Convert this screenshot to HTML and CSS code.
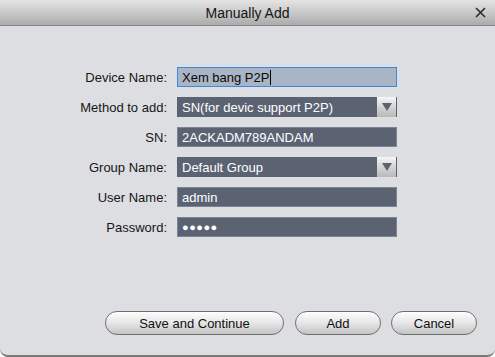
FILE: index.html
```html
<!DOCTYPE html>
<html lang="en">
<head>
  <meta charset="UTF-8"/>
  <title>Manually Add</title>
  <link rel="stylesheet" href="styles.css">
</head>
<body>
  <div class="dialog">
    <!-- title bar -->
    <div class="titlebar">
      <span class="title">Manually Add</span>
      <svg class="close" width="11" height="11" viewBox="0 0 11 11">
        <path d="M1 1 L10 10 M10 1 L1 10" stroke="#2b2b2b" stroke-width="1.6" fill="none"/>
      </svg>
    </div>

    <div class="content">
      <div class="form">
        <label>Device Name:</label>
        <div class="field focused">Xem bang P2P<span class="caret"></span></div>

        <label>Method to add:</label>
        <div class="field select">
          <span class="value">SN(for devic support P2P)</span>
          <span class="arrow"></span>
        </div>

        <label>SN:</label>
        <div class="field">2ACKADM789ANDAM</div>

        <label>Group Name:</label>
        <div class="field select">
          <span class="value">Default Group</span>
          <span class="arrow"></span>
        </div>

        <label>User Name:</label>
        <div class="field">admin</div>

        <label>Password:</label>
        <div class="field dots">●●●●●</div>
      </div>

      <div class="buttons">
        <button class="btn wide">Save and Continue</button>
        <button class="btn">Add</button>
        <button class="btn">Cancel</button>
      </div>
    </div>
  </div>
</body>
</html>
```

FILE: styles.css
```css
* { margin:0; padding:0; box-sizing:border-box; }
html, body { width:100%; height:100%; background:#ffffff; }
body { font-family:"Liberation Sans", Arial, sans-serif; font-size:13px; color:#111; }

/* === window === */
.dialog {
  width:495px; height:357px;
  display:flex; flex-direction:column;
  background:#dcdee2;
  border-bottom:2px solid #7a7a7a;
  border-radius:0 0 8px 8px;
  overflow:hidden;
}
.titlebar {
  height:26px;
  flex:none;
  display:flex; align-items:center; justify-content:center;
  position:relative;
  background:linear-gradient(#e4e4e4, #c6c6c6 55%, #ababab);
  border-bottom:1px solid #858585;
}
.title { font-size:14px; color:#151515; }
.close { position:absolute; right:9px; top:7px; }

/* === form === */
.content {
  flex:1;
  display:flex; flex-direction:column;
  padding-top:41px;
}
.form {
  display:grid;
  grid-template-columns:167px 220px;
  grid-auto-rows:20px;
  column-gap:10px;
  row-gap:10px;
}
.form label {
  justify-self:end; align-self:center;
  color:#161616;
}
.field {
  display:flex; align-items:center;
  padding-left:4px;
  background:#5b6373;
  border:1px solid #7d8594;
  color:#ffffff;
  white-space:nowrap;
}
.field.focused {
  background:#a9b4c5;
  border-color:#3a89dc;
  color:#0a0a0a;
}
.caret { display:inline-block; width:1px; height:15px; background:#000; margin-left:1px; }
.field.select { padding-right:0; border-color:#5b6373; }
.field.select .value { flex:1; }
.arrow {
  width:19px; height:20px; margin-top:-1px; margin-bottom:-1px;
  background:linear-gradient(#f6f6f6, #d4d4d4 50%, #b9b9b9);
  display:flex; align-items:center; justify-content:center;
}
.arrow::after {
  content:'';
  border-left:5px solid transparent;
  border-right:5px solid transparent;
  border-top:8px solid #5b6373;
}
.dots { font-size:11px; letter-spacing:0.5px; }

/* === buttons === */
.buttons {
  margin-top:auto;
  margin-bottom:20px;
  display:flex; justify-content:flex-end;
  gap:10px;
  padding-right:18px;
}
.btn {
  width:86px; height:24px;
  font-family:inherit; font-size:13px; color:#111;
  border:1px solid #6f6f6f;
  border-radius:12px;
  background:linear-gradient(#fdfdfd, #e9e9e9 45%, #c4c4c4);
  box-shadow:inset 0 1px 0 #ffffff;
}
.btn.wide { width:179px; margin-right:1px; }
```
